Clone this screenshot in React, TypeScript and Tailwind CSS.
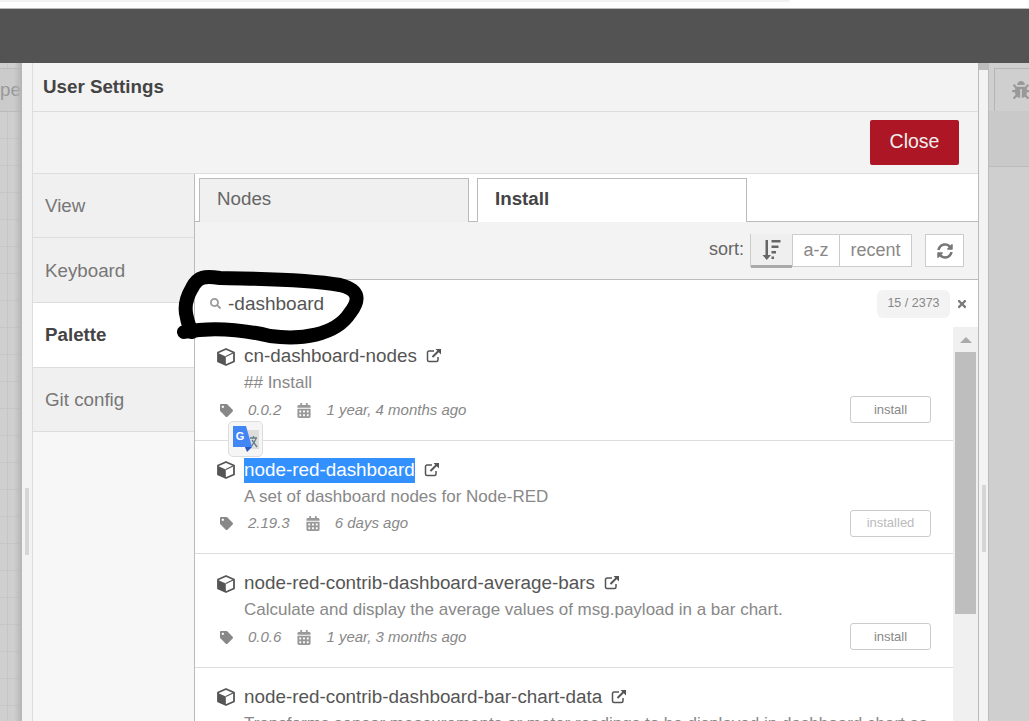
import { FaBug, FaCalendarAlt, FaSearch, FaSyncAlt, FaTag, FaTimes } from 'react-icons/fa';

const nodes = [
  { name: 'cn-dashboard-nodes', desc: '## Install', version: '0.0.2', updated: '1 year, 4 months ago', action: 'install' },
  { name: 'node-red-dashboard', desc: 'A set of dashboard nodes for Node-RED', version: '2.19.3', updated: '6 days ago', action: 'installed', selected: true },
  { name: 'node-red-contrib-dashboard-average-bars', desc: 'Calculate and display the average values of msg.payload in a bar chart.', version: '0.0.6', updated: '1 year, 3 months ago', action: 'install' },
  { name: 'node-red-contrib-dashboard-bar-chart-data', desc: 'Transforms sensor measurements or meter readings to be displayed in dashboard chart as', version: '0.0.3', updated: '1 year, 2 months ago', action: 'install' },
];

function CubeIcon() {
  return (
    <svg width="18" height="18" viewBox="0 0 18 18" className="shrink-0">
      <path d="M9 1L17 4.500V13.500L9 17L1 13.500V4.500z" fill="#fff" stroke="#555" strokeWidth="1.800" strokeLinejoin="round" />
      <path d="M1 5L8.800 8.500V17L1 13.500z" fill="#555" />
      <path d="M8.800 8.500L17 4.500" stroke="#555" strokeWidth="1.300" />
    </svg>
  );
}

function ExternalLink() {
  return (
    <svg width="16" height="15" viewBox="0 0 16 15" fill="none" stroke="#555" className="shrink-0">
      <path d="M8 3H3a1.500 1.500 0 0 0-1.500 1.500v7.500A1.500 1.500 0 0 0 3 13.500h7.500A1.500 1.500 0 0 0 12 12V9" strokeWidth="1.500" />
      <path d="M6.500 9L14 1.500" strokeWidth="2" />
      <path d="M9.500 1h5.500v5.500z" fill="#555" stroke="none" />
    </svg>
  );
}

function SortIcon() {
  return (
    <svg width="20" height="22" viewBox="0 0 20 22" fill="#666">
      <path d="M3.500 1h2.500v15h3l-4.250 5L.5 16h3z" />
      <path d="M9.500 1h9v2.500h-9zM9.500 6.500h7v2.500h-7zM9.500 12h4.500v2.500H9.500zM9.500 17.500h2.500V20H9.500z" />
    </svg>
  );
}

function NodeRow({ name, desc, version, updated, action, selected }: (typeof nodes)[number]) {
  return (
    <div className="relative h-[113.500px] shrink-0 border-b border-[#ddd] px-[22px] pt-[17px]">
      <div className="flex h-[25px] items-center">
        <CubeIcon />
        <span className={selected ? 'ml-[9px] h-[25px] bg-[#3390ff] text-[18.850px] leading-[23px] text-white' : 'ml-[9px] h-[25px] text-[18.850px] leading-[23px] text-[#555]'}>
          {name}
        </span>
        <span className="ml-[9px] -mt-[2px]"><ExternalLink /></span>
      </div>
      <div className="ml-[27px] mt-[1px] h-[26px] whitespace-nowrap text-[17px] leading-[26px] text-[#888]">{desc}</div>
      <div className="flex h-[28px] items-center text-[15px] italic text-[#888]">
        <FaTag className="ml-[3px] h-[13px] w-[13px] shrink-0 text-[#888]" />
        <span className="ml-[15px]">{version}</span>
        <FaCalendarAlt className="ml-[16px] h-[15px] w-[14px] shrink-0 text-[#999]" />
        <span className="ml-[15px]">{updated}</span>
      </div>
      <button className={action === 'installed' ? 'absolute right-[22px] top-[69px] h-[27px] w-[81px] rounded-[3px] border border-[#ccc] bg-white text-[13px] text-[#bbb]' : 'absolute right-[22px] top-[69px] h-[27px] w-[81px] rounded-[3px] border border-[#ccc] bg-white text-[13px] text-[#888]'}>
        {action}
      </button>
    </div>
  );
}

export default function App() {
  return (
    <div className="relative h-[721px] w-[1029px] overflow-hidden bg-white font-['Liberation_Sans',Arial,sans-serif]">
      {/* browser chrome remains and the editor header */}
      <div className="h-[2px] w-[790px] rounded-br-lg bg-[#f2f2f2]"></div>
      <div className="h-[6px]"></div>
      <div className="h-[55px] border-t border-[#bbb] bg-[#535353]"></div>

      <div className="flex h-[658px]">
        {/* workspace behind the tray */}
        <div className="relative w-[22px] shrink-0 overflow-hidden bg-[#cfcfcf] bg-[linear-gradient(#c6c6c6_1px,transparent_1px),linear-gradient(90deg,#c6c6c6_1px,transparent_1px)] bg-[size:27px_27px] bg-[position:7px_21px]">
          <div className="mt-[5px] h-[44px] whitespace-nowrap border-y border-[#bbb] bg-[#cbcbcb] text-[18.750px] leading-[42px] text-[#999]">pe</div>
          <div className="absolute inset-y-0 right-0 w-[8px] bg-gradient-to-r from-transparent to-[#b4b4b4]"></div>
        </div>
        <div className="w-[11px] shrink-0 border-r border-[#ddd] bg-[#f3f3f3] pl-[3px] pt-[425px]">
          <div className="h-[67px] w-[4px] bg-[#d6d6d6]"></div>
        </div>

        {/* settings dialog */}
        <div className="flex w-[945px] shrink-0 flex-col bg-white">
          <div className="h-[49px] shrink-0 border-b border-[#ddd] bg-[#f3f3f3] pl-[10px] text-[18.750px] font-bold leading-[47px] text-[#444]">User Settings</div>
          <div className="flex h-[62px] shrink-0 items-start justify-end border-b border-[#ddd] bg-[#f3f3f3] pr-[19px] pt-[8px]">
            <button className="h-[45px] w-[89px] rounded-[2px] bg-[#ad1625] pb-[2px] text-[19.500px] text-[#eee]">Close</button>
          </div>

          <div className="flex min-h-0 flex-1">
            <div className="w-[162px] shrink-0 border-r border-[#bbb] bg-[#f7f7f7] text-[18.750px] text-[#777]">
              <div className="h-[64px] border-b border-[#ddd] bg-[#f0f0f0] pl-[12px] leading-[64px]">View</div>
              <div className="h-[65px] border-b border-[#ddd] bg-[#f0f0f0] pl-[12px] leading-[65px]">Keyboard</div>
              <div className="h-[64px] bg-white pl-[12px] font-bold leading-[64px] text-[#444]">Palette</div>
              <div className="h-[65px] border-y border-[#ddd] bg-[#f0f0f0] pl-[12px] leading-[63px]">Git config</div>
            </div>

            <div className="flex min-w-0 flex-1 flex-col">
              {/* tabs */}
              <div className="flex h-[48px] shrink-0 gap-[8px] border-b border-[#bbb] bg-white pl-[4px] pt-[4px]">
                <div className="h-[44px] w-[270px] border border-b-0 border-[#bbb] bg-[#f0f0f0] pl-[17px] text-[18.750px] leading-[40px] text-[#666]">Nodes</div>
                <div className="relative z-10 h-[44px] w-[270px] border border-b-0 border-[#bbb] bg-white pl-[17px] text-[18.750px] font-bold leading-[40px] text-[#444]">Install</div>
              </div>

              {/* sort toolbar */}
              <div className="flex h-[58px] shrink-0 items-start justify-end border-b border-[#bbb] bg-[#f3f3f3] pr-[14px] pt-[12px]">
                <span className="mr-[6px] text-[18px] leading-[30px] text-[#666]">sort:</span>
                <div className="flex h-[33px] border border-[#ccc] bg-white text-[18px] leading-[28px] text-[#888]">
                  <div className="-my-px flex h-[34px] w-[41px] items-center justify-center border-b-[3px] border-[#aaa] bg-[#efefef]"><SortIcon /></div>
                  <div className="flex w-[47px] items-center justify-center border-l border-[#ccc] pb-[1px]">a-z</div>
                  <div className="flex w-[72px] items-center justify-center border-l border-[#ccc] pb-[1px]">recent</div>
                </div>
                <div className="ml-[13px] flex h-[33px] w-[39px] items-center justify-center border border-[#ccc] bg-white">
                  <FaSyncAlt className="h-[16px] w-[16px] text-[#777]" />
                </div>
              </div>

              {/* search */}
              <div className="flex h-[47px] shrink-0 items-center bg-white pl-[15px] pr-[10px]">
                <FaSearch className="h-[11px] w-[11px] text-[#999]" />
                <span className="ml-[7px] pt-[2px] text-[19px] text-[#555]">-dashboard</span>
                <span className="ml-auto flex h-[28px] w-[73px] items-center justify-center rounded-[6px] bg-[#f3f3f3] text-[12.500px] text-[#888]">15 / 2373</span>
                <FaTimes className="ml-[6px] h-[12px] w-[12px] text-[#777]" />
              </div>

              {/* results */}
              <div className="flex min-h-0 flex-1">
                <div className="flex min-w-0 flex-1 flex-col overflow-hidden">
                  {nodes.map((node) => (
                    <NodeRow key={node.name} {...node} />
                  ))}
                </div>
                <div className="w-[25px] shrink-0 bg-[#f0f0f0] px-[2px]">
                  <div className="mx-auto mt-[10px] h-0 w-0 border-x-[6px] border-b-[6px] border-x-transparent border-b-[#aaa]"></div>
                  <div className="mt-[9px] h-[262px] bg-[#bebebe]"></div>
                </div>
              </div>
            </div>
          </div>
        </div>

        <div className="w-[11px] shrink-0 border-x border-[#bbb] bg-[#f3f3f3]">
          <div className="h-[7px] bg-[#bdbdbd]"></div>
          <div className="ml-[3px] mt-[415px] h-[67px] w-[4px] bg-[#d6d6d6]"></div>
        </div>

        {/* sidebar behind the tray */}
        <div className="flex w-[40px] shrink-0 flex-col bg-[#cfcfcf] pt-[5px]">
          <div className="ml-[5px] flex h-[43px] items-center border-l border-t border-[#b5b5b5] pl-[17px]">
            <FaBug className="h-[18px] w-[18px] shrink-0 text-[#999]" />
          </div>
          <div className="h-[56px] border-b border-[#bbb] bg-[#c9c9c9]"></div>
        </div>
      </div>

      {/* marker scribble drawn over the search box */}
      <svg className="pointer-events-none absolute left-[170px] top-[265px]" width="200" height="80" viewBox="0 0 200 80" fill="none">
        <path d="M14 67C40 62 70 64 100 71C130 75 165 71 180 48C190 35 190 25 170 20C130 13 80 14 50 13C35 11 28 11 22 23C16 33 14 43 17 53C18 59 20 63 22 67" stroke="#000" strokeWidth="14" strokeLinecap="round" strokeLinejoin="round" />
      </svg>

      {/* translate extension popup */}
      <div className="absolute left-[228px] top-[421px] flex h-[36px] w-[35px] items-center justify-center rounded-[5px] border border-[#ddd] bg-[#f5f5f5]">
        <svg width="28" height="28" viewBox="0 0 28 28">
          <rect x="13" y="5" width="14" height="19" fill="#ddd" />
          <path d="M18 13h7M21.500 11v2M19 22l5-8M20 15l5 7" stroke="#5f7a86" strokeWidth="1.300" fill="none" />
          <path d="M1 1h13l6 21H1z" fill="#4285f4" />
          <path d="M13 22h7l-5 5z" fill="#2a56c6" />
          <text x="8" y="15" textAnchor="middle" fontSize="11" fontWeight="700" fill="#fff" fontFamily="Liberation Sans, sans-serif">G</text>
        </svg>
      </div>
    </div>
  );
}
